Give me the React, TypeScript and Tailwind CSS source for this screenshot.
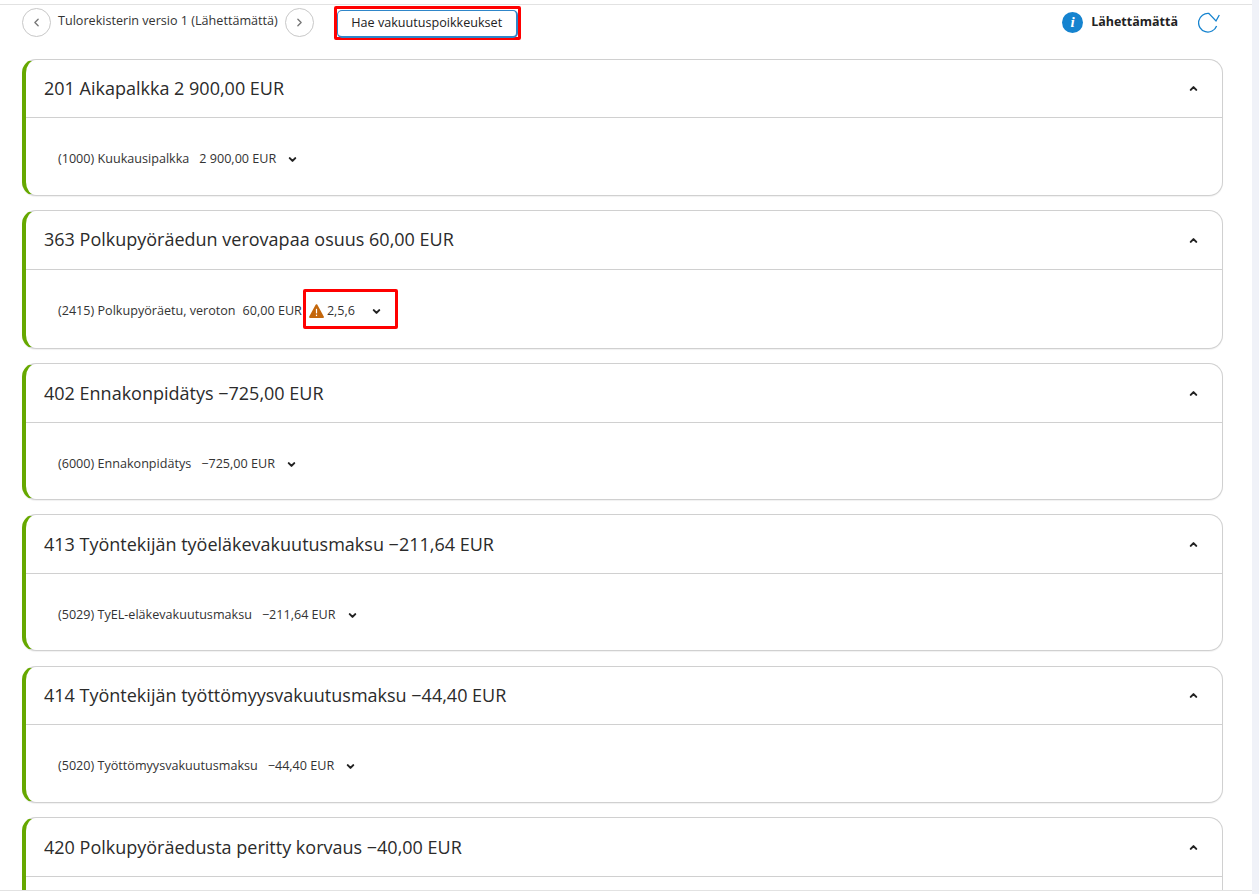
import React from "react";
import { ChevronDown, ChevronLeft, ChevronRight, ChevronUp } from "lucide-react";

interface Row {
  title: string;
  code: string;
  amount: string;
  warning?: string;
  gapClass: string;
  headerClass: string;
  titleClass: string;
  bodyClass: string;
}

const rows: Row[] = [
  {
    title: "201 Aikapalkka 2 900,00 EUR",
    code: "(1000) Kuukausipalkka",
    amount: "2 900,00 EUR",
    gapClass: "mb-[14px]",
    headerClass: "h-[58px]",
    titleClass: "pb-[2px]",
    bodyClass: "h-[77px] pt-[5px]",
  },
  {
    title: "363 Polkupyöräedun verovapaa osuus 60,00 EUR",
    code: "(2415) Polkupyöräetu, veroton",
    amount: "60,00 EUR",
    warning: "2,5,6",
    gapClass: "mb-[14px]",
    headerClass: "h-[59px]",
    titleClass: "pb-[2px]",
    bodyClass: "h-[78px] pt-[5px]",
  },
  {
    title: "402 Ennakonpidätys −725,00 EUR",
    code: "(6000) Ennakonpidätys",
    amount: "−725,00 EUR",
    gapClass: "mb-[14px]",
    headerClass: "h-[59px]",
    titleClass: "",
    bodyClass: "h-[76px] pt-[6px]",
  },
  {
    title: "413 Työntekijän työeläkevakuutusmaksu −211,64 EUR",
    code: "(5029) TyEL-eläkevakuutusmaksu",
    amount: "−211,64 EUR",
    gapClass: "mb-[15px]",
    headerClass: "h-[59px]",
    titleClass: "",
    bodyClass: "h-[76px] pt-[6px]",
  },
  {
    title: "414 Työntekijän työttömyysvakuutusmaksu −44,40 EUR",
    code: "(5020) Työttömyysvakuutusmaksu",
    amount: "−44,40 EUR",
    gapClass: "mb-[14px]",
    headerClass: "h-[58px]",
    titleClass: "pb-[2px]",
    bodyClass: "h-[77px] pt-[5px]",
  },
];

function CardHeader({ title, heightClass, titleClass }: { title: string; heightClass: string; titleClass: string }) {
  return (
    <header className={`flex items-center justify-between pl-[18px] pr-[23px] border-b border-[#d0d0d0] ${heightClass}`}>
      <h2 className={`text-[18px] font-normal text-[#2b2b2b] leading-none ${titleClass}`}>{title}</h2>
      <ChevronUp size={11} strokeWidth={4.5} className="text-[#222]" />
    </header>
  );
}

function WarningIcon() {
  return (
    <svg width="15" height="15" viewBox="0 0 15 15">
      <path
        d="M7.5 1.2 L13.9 13 L1.1 13 Z"
        fill="#c4670c"
        stroke="#c4670c"
        strokeWidth="2"
        strokeLinejoin="round"
      />
      <rect x="6.9" y="4.8" width="1.2" height="4.6" fill="#fff" />
      <rect x="6.9" y="10.6" width="1.2" height="1.5" fill="#fff" />
    </svg>
  );
}

function PayCard({ row }: { row: Row }) {
  return (
    <section
      className={`bg-white rounded-[14px] border border-[#d0d0d0] border-l-[4px] border-l-[#66a800] shadow-[0_1px_1px_rgba(0,0,0,0.06)] ${row.gapClass}`}
    >
      <CardHeader title={row.title} heightClass={row.headerClass} titleClass={row.titleClass} />
      <div className={`flex items-center pl-[32px] text-[12.6px] text-[#333] ${row.bodyClass}`}>
        <span>{row.code}</span>
        <span className={row.warning ? "ml-[7px]" : "ml-[10px]"}>{row.amount}</span>
        {row.warning ? (
          <div className="flex items-center w-[95px] h-[40px] ml-[1px] -mt-[6px] pt-[6px] border-[3px] border-[#ff0000] rounded-[2px] pl-[3px]">
            <WarningIcon />
            <span className="ml-[3px]">{row.warning}</span>
            <ChevronDown size={11} strokeWidth={4.5} className="ml-[16px] text-[#222]" />
          </div>
        ) : (
          <ChevronDown size={11} strokeWidth={4.5} className="ml-[11px] text-[#222]" />
        )}
      </div>
    </section>
  );
}

function RoundButton({ children }: { children: React.ReactNode }) {
  return (
    <button className="w-[29px] h-[29px] rounded-full border border-[#c8c8c8] bg-white flex items-center justify-center text-[#777] shrink-0">
      {children}
    </button>
  );
}

export default function App() {
  return (
    <div className="h-[894px] w-[1259px] overflow-hidden bg-white flex font-['Open_Sans',sans-serif]">
      <main className="w-[1252px] h-[894px] flex flex-col">
        <div className="mt-[4px] border-t border-[#e2e2e2] h-[55px] pl-[22px] flex items-start shrink-0">
          <div className="flex items-center mt-[3px]">
            <RoundButton>
              <ChevronLeft size={13} strokeWidth={2.5} />
            </RoundButton>
            <span className="ml-[7px] pb-[2px] text-[12.6px] text-[#333]">Tulorekisterin versio 1 (Lähettämättä)</span>
            <span className="ml-[7px]">
              <RoundButton>
                <ChevronRight size={13} strokeWidth={2.5} />
              </RoundButton>
            </span>
          </div>
          <div className="ml-[20px] mt-[1px] border-[3px] border-[#ff0000] rounded-[2px] w-[187px] h-[34px]">
            <button className="w-full h-full bg-white border border-r-2 border-b-2 border-[#2f86c9] rounded-[5px] text-[12.6px] text-[#222]">
              Hae vakuutuspoikkeukset
            </button>
          </div>
          <div className="ml-auto mr-[31px] mt-[6px] flex items-center">
            <span className="w-[21px] h-[21px] rounded-full bg-[#1583cf] text-white flex items-center justify-center text-[15px] font-bold italic font-['Liberation_Serif',serif]">
              i
            </span>
            <span className="ml-[8px] text-[12.5px] font-bold text-[#222]">Lähettämättä</span>
            <svg className="ml-[20px]" width="23" height="22" viewBox="0 0 23 22" fill="none" stroke="#1583cf" strokeWidth="1.3">
              <path d="M18.6 15 A9.3 9.3 0 1 1 11 2.5 L18 10 L21.3 4" />
            </svg>
          </div>
        </div>
        <div className="pl-[22px] pr-[29px] flex flex-col flex-1 overflow-hidden mb-[3px] border-b border-[#e2e2e2]">
          {rows.map((row) => (
            <PayCard key={row.code} row={row} />
          ))}
          <section className="bg-white rounded-t-[14px] border border-b-0 border-[#d0d0d0] border-l-[4px] border-l-[#66a800] flex-1">
            <CardHeader title="420 Polkupyöräedusta peritty korvaus −40,00 EUR" heightClass="h-[59px]" titleClass="" />
          </section>
        </div>
      </main>
      <aside className="flex-1 bg-[#f0f2f8]" />
    </div>
  );
}
